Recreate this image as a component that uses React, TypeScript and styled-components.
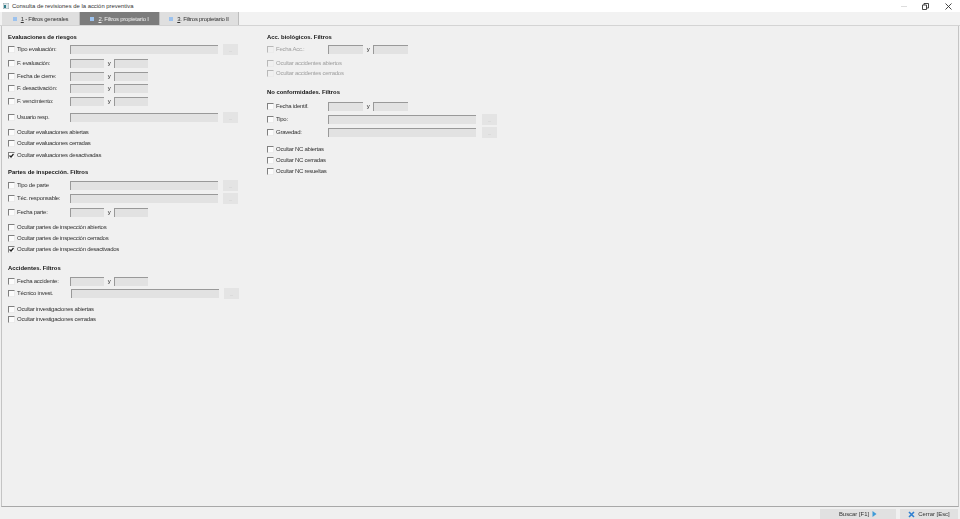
import React from 'react';
import styled, { createGlobalStyle } from 'styled-components';

const GlobalStyle = createGlobalStyle`
  html, body {
    margin: 0;
    padding: 0;
    background: #f0f0f0;
  }
  body {
    font-family: "Liberation Sans", Arial, sans-serif;
    font-size: 6px;
    letter-spacing: -0.26px;
    color: #333;
  }
`

const Window = styled.div`
  width: 960px;
  height: 519px;
  display: flex;
  flex-direction: column;
  overflow: hidden;
  filter: blur(0.3px);
`
const TitleBar = styled.div`
  height: 12px;
  flex: none;
  display: flex;
  align-items: center;
  background: #fff;
  padding-left: 3px;
  font-size: 5.9px;
  letter-spacing: 0;
  color: #333;
`
const TitleText = styled.span`
  margin-left: 3px;
  flex: 1;
`
const WinButton = styled.div<{ $width: number }>`
  width: ${props => props.$width}px;
  display: flex;
  justify-content: center;
  align-items: center;
`
const TabStrip = styled.div`
  height: 13px;
  flex: none;
  display: flex;
  padding-left: 2px;
  background: #f2f2f2;
  border-bottom: 1px solid #d4d4d4;
`
const Tab = styled.div<{ $active?: boolean; $width: number }>`
  width: ${props => props.$width}px;
  display: flex;
  align-items: center;
  justify-content: center;
  gap: 4px;
  background: ${props => props.$active ? '#7c7c7c' : '#dfdfdf'};
  color: ${props => props.$active ? '#eee' : '#333'};
  border-right: 1px solid #bdbdbd;
`
const TabDot = styled.span`
  width: 4px;
  height: 4px;
  background: #9cc2ee;
`
const Panel = styled.div`
  flex: 1;
  display: flex;
  margin: 0 1px;
  border-left: 1px solid #c4c4c4;
  border-right: 1px solid #c4c4c4;
  border-bottom: 1px solid #a8a8a8;
  padding: 6px 0 0 6px;
`
const Column = styled.div<{ $width: number }>`
  width: ${props => props.$width}px;
  display: flex;
  flex-direction: column;
`
const Heading = styled.div<{ $top: number }>`
  height: 10px;
  line-height: 10px;
  margin-top: ${props => props.$top}px;
  font-weight: bold;
  font-size: 5.9px;
  letter-spacing: 0;
  color: #111;
`
const Row = styled.div<{ $top: number; $disabled?: boolean }>`
  height: 10px;
  margin-top: ${props => props.$top}px;
  display: flex;
  align-items: center;
  color: ${props => props.$disabled ? '#a0a0a0' : '#333'};
`
const Check = styled.span<{ $disabled?: boolean }>`
  width: 7px;
  height: 7px;
  flex: none;
  box-sizing: border-box;
  display: flex;
  align-items: center;
  justify-content: center;
  margin-right: 2px;
  background: ${props => props.$disabled ? '#f0f0f0' : '#fbfbfb'};
  border: 1px solid #ebebeb;
  border-top-color: ${props => props.$disabled ? '#b8b8b8' : '#808080'};
  border-left-color: ${props => props.$disabled ? '#b8b8b8' : '#808080'};
`
const Label = styled.span<{ $width: number }>`
  width: ${props => props.$width}px;
  flex: none;
  white-space: nowrap;
`
const Field = styled.span<{ $width: number }>`
  width: ${props => props.$width}px;
  height: 9px;
  flex: none;
  box-sizing: border-box;
  background: #e2e2e2;
  border-top: 1px solid #999;
  border-left: 1px solid #999;
`
const Between = styled.span`
  width: 10px;
  flex: none;
  text-align: center;
  color: #222;
`
const Lookup = styled.span<{ $gap: number }>`
  width: 15px;
  height: 11px;
  flex: none;
  margin-left: ${props => props.$gap}px;
  background: #e4e4e4;
  color: #bbb;
  font-size: 4px;
  line-height: 14px;
  text-align: center;
`
const Footer = styled.div`
  height: 12px;
  flex: none;
  display: flex;
  justify-content: flex-end;
  align-items: flex-end;
  gap: 4px;
  padding-right: 2px;
`
const FootButton = styled.div<{ $width: number }>`
  width: ${props => props.$width}px;
  height: 10px;
  display: flex;
  align-items: center;
  justify-content: center;
  gap: 3px;
  background: #e1e1e1;
  letter-spacing: 0;
  font-size: 5.9px;
`

type Item =
  | { kind: 'head'; text: string; top: number }
  | { kind: 'text' | 'date' | 'check'; text: string; top: number; checked?: boolean; disabled?: boolean; labelWidth?: number };

const leftItems: Item[] = [
  { kind: 'head', text: 'Evaluaciones de riesgos', top: 0 },
  { kind: 'text', text: 'Tipo evaluación:', top: 2 },
  { kind: 'date', text: 'F. evaluación:', top: 4 },
  { kind: 'date', text: 'Fecha de cierre:', top: 3 },
  { kind: 'date', text: 'F. desactivación:', top: 2 },
  { kind: 'date', text: 'F. vencimiento:', top: 3 },
  { kind: 'text', text: 'Usuario resp.', top: 6 },
  { kind: 'check', text: 'Ocultar evaluaciones abiertas', top: 5 },
  { kind: 'check', text: 'Ocultar evaluaciones cerradas', top: 1 },
  { kind: 'check', text: 'Ocultar evaluaciones desactivadas', top: 2, checked: true },
  { kind: 'head', text: 'Partes de inspección. Filtros', top: 7 },
  { kind: 'text', text: 'Tipo de parte', top: 3 },
  { kind: 'text', text: 'Téc. responsable:', top: 3 },
  { kind: 'date', text: 'Fecha parte:', top: 4 },
  { kind: 'check', text: 'Ocultar partes de inspección abiertos', top: 5 },
  { kind: 'check', text: 'Ocultar partes de inspección cerrados', top: 1 },
  { kind: 'check', text: 'Ocultar partes de inspección desactivados', top: 1, checked: true },
  { kind: 'head', text: 'Accidentes. Filtros', top: 9 },
  { kind: 'date', text: 'Fecha accidente:', top: 3 },
  { kind: 'text', text: 'Técnico invest.', top: 2, labelWidth: 54 },
  { kind: 'check', text: 'Ocultar investigaciones abiertas', top: 6 },
  { kind: 'check', text: 'Ocultar investigaciones cerradas', top: 0 },
];

const rightItems: Item[] = [
  { kind: 'head', text: 'Acc. biológicos. Filtros', top: 0 },
  { kind: 'date', text: 'Fecha Acc.:', top: 2, disabled: true },
  { kind: 'check', text: 'Ocultar accidentes abiertos', top: 4, disabled: true },
  { kind: 'check', text: 'Ocultar accidentes cerrados', top: 0, disabled: true },
  { kind: 'head', text: 'No conformidades. Filtros', top: 9 },
  { kind: 'date', text: 'Fecha identif.', top: 4 },
  { kind: 'text', text: 'Tipo:', top: 3 },
  { kind: 'text', text: 'Gravedad:', top: 3 },
  { kind: 'check', text: 'Ocultar NC abiertas', top: 7 },
  { kind: 'check', text: 'Ocultar NC cerradas', top: 1 },
  { kind: 'check', text: 'Ocultar NC resueltas', top: 1 },
];

const Tick = () => (
  <svg width="5" height="5" viewBox="0 0 5 5">
    <path d="M0.5 2.5 L2 4 L4.5 1" fill="none" stroke="#222" strokeWidth="1.2" />
  </svg>
);

interface ColumnProps {
  items: Item[];
  width: number;
  labelWidth: number;
  dateWidth: number;
  gap: number;
}

const FormColumn = ({ items, width, labelWidth, dateWidth, gap }: ColumnProps) => (
  <Column $width={width}>
    {items.map(item => {
      if (item.kind === 'head') {
        return <Heading key={item.text} $top={item.top}>{item.text}</Heading>
      }
      return (
        <Row key={item.text} $top={item.top} $disabled={item.disabled}>
          <Check $disabled={item.disabled}>{item.checked ? <Tick /> : null}</Check>
          {item.kind === 'check'
            ? <span>{item.text}</span>
            : <Label $width={item.labelWidth ?? labelWidth}>{item.text}</Label>}
          {item.kind === 'text' ? <><Field $width={148} /><Lookup $gap={gap}>...</Lookup></> : null}
          {item.kind === 'date' ? <><Field $width={dateWidth} /><Between>y</Between><Field $width={dateWidth} /></> : null}
        </Row>
      )
    })}
  </Column>
);

const App = () => (
  <Window>
    <GlobalStyle />
    <TitleBar>
      <svg width="6" height="6" viewBox="0 0 6 6">
        <rect width="6" height="6" fill="#dfe7ea" stroke="#7d8c90" strokeWidth="0.6" />
        <rect x="1" y="2" width="2" height="3" fill="#2f7d8a" />
      </svg>
      <TitleText>Consulta de revisiones de la acción preventiva</TitleText>
      <WinButton $width={20}>
        <svg width="6" height="1" viewBox="0 0 6 1"><rect width="6" height="1" fill="#ddd" /></svg>
      </WinButton>
      <WinButton $width={22}>
        <svg width="7" height="7" viewBox="0 0 7 7">
          <path d="M0.5 2 H4.5 V6.5 H0.5 Z M2 2 V0.5 H6.5 V5 H4.5" fill="none" stroke="#333" strokeWidth="0.9" />
        </svg>
      </WinButton>
      <WinButton $width={24}>
        <svg width="7" height="7" viewBox="0 0 7 7">
          <path d="M0.5 0.5 L6.5 6.5 M6.5 0.5 L0.5 6.5" fill="none" stroke="#333" strokeWidth="0.9" />
        </svg>
      </WinButton>
    </TitleBar>
    <TabStrip>
      <Tab $width={77}><TabDot /><span><u>1</u> - Filtros generales</span></Tab>
      <Tab $width={79} $active><TabDot /><span><u>2</u>. Filtros propietario I</span></Tab>
      <Tab $width={78}><TabDot /><span><u>3</u>. Filtros propietario II</span></Tab>
    </TabStrip>
    <Panel>
      <FormColumn items={leftItems} width={259} labelWidth={53} dateWidth={34} gap={5} />
      <FormColumn items={rightItems} width={300} labelWidth={52} dateWidth={35} gap={6} />
    </Panel>
    <Footer>
      <FootButton $width={76}>
        <span>Buscar [F1]</span>
        <svg width="5" height="6" viewBox="0 0 5 6"><path d="M0.5 0 L4.5 3 L0.5 6 Z" fill="#3f9bd8" /></svg>
      </FootButton>
      <FootButton $width={58}>
        <svg width="7" height="7" viewBox="0 0 7 7">
          <path d="M1 1 L6 6 M6 1 L1 6" fill="none" stroke="#2f7fd0" strokeWidth="1.6" />
        </svg>
        <span>Cerrar [Esc]</span>
      </FootButton>
    </Footer>
  </Window>
);

export default App;
